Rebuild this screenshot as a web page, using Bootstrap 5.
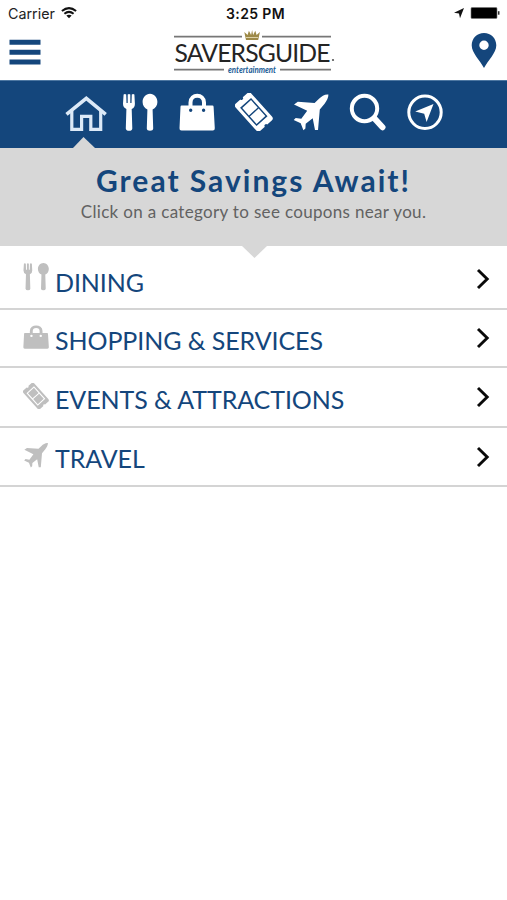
<!DOCTYPE html>
<html lang="en">
<head>
<meta charset="utf-8">
<meta name="viewport" content="width=device-width, initial-scale=1">
<title>SaversGuide</title>
<link href="https://cdn.jsdelivr.net/npm/bootstrap@5.3.0/dist/css/bootstrap.min.css" rel="stylesheet">
<style>
:root{--navy:#14467c;--pale:#d7d7d7}
body{font-family:Lato,sans-serif;background:#fff;min-height:900px;overflow-x:hidden}
svg{display:block;flex-shrink:0}
.status-bar{height:28px;padding-bottom:2px;font:14.3px Inter,sans-serif;color:#222}
.status-time{font-weight:600;font-size:14px;letter-spacing:.35px;color:#111;margin-left:2px}
.brand-bar{height:52px;color:var(--navy)}
.icon-bar{height:68px;background:var(--navy);border-top:1px solid #4d77a2;padding-top:12px;color:#fff}
.icon-cell{width:57px}
.caret-up{left:73px;bottom:0}
.hero{height:98px;background:var(--pale);padding-top:16px}
.hero h1{font-size:30px;font-weight:700;line-height:32px;color:var(--navy);letter-spacing:2px;margin:0}
.hero p{font-size:17px;line-height:20px;color:#626262;letter-spacing:.33px;margin:6px 0 0}
.caret-down{left:242px;top:98px;z-index:2}
.list-group-flush>.list-group-item.category{border:0;border-bottom:2px solid #d4d4d4;height:59px;padding:0 17px 0 23px;color:var(--navy)}
.list-group-flush>.list-group-item.category:first-child{height:64px;padding-top:7px}
.list-group-flush>.list-group-item.category:nth-child(2){height:58px}
.list-group-flush>.list-group-item.category:nth-child(3){height:60px}
.category span{font-size:25px;line-height:30px;letter-spacing:-.08px;white-space:nowrap;margin-left:6px;padding-top:3px}
.category .glyph{color:#bfbfbf;margin-bottom:3px}
.category:first-child .glyph{margin-bottom:8px}
.category:first-child .ms-auto{margin-bottom:4px}
</style>
</head>
<body>
<svg width="0" height="0" class="position-absolute" aria-hidden="true">
  <symbol id="utensils" viewBox="0 0 38 38">
    <path fill="currentColor" d="M1.800 1.600Q3.100.4 4.400 1.600L4.700 10h1.200V1.600q1.300-1.200 2.600 0V10h1.200l.3-8.400q1.300-1.200 2.600 0l.5 9.200q.1 3.900-3.200 5.200l.6 19.500q-.2 2.300-3.200 2.300T4 35.500L4.600 16Q1.200 14.500 1.200 10.800z" transform="translate(.8 0)"/>
    <path fill="currentColor" d="M29 .7c4.300 0 7.400 3.800 7.400 8.200 0 3.500-1.900 6.300-4.800 7.500l.6 19.200q-.2 2.200-3.200 2.200t-3.200-2.200l.6-19.200c-2.900-1.200-4.800-4-4.800-7.500C21.600 4.500 24.700.7 29 .7z"/>
  </symbol>
  <symbol id="bag" viewBox="0 0 38 38">
    <path fill="none" stroke="currentColor" stroke-width="4" d="M12.500 13V9.500C12.500 .5 26 .5 26 9.500V13"/>
    <path fill="currentColor" fill-rule="evenodd" d="M3.500 12.500h31q1 0 1.100 1.200l1.200 21.500q.1 2.300-2 2.300H3.500q-2.200 0-2-2.300l1-21.500q.1-1.200 1-1.200zM12.700 15.600a1.700 1.700 0 1 0 0 3.400 1.700 1.700 0 0 0 0-3.400zM25.600 15.600a1.700 1.700 0 1 0 0 3.400 1.700 1.700 0 0 0 0-3.400z"/>
  </symbol>
  <symbol id="ticket" viewBox="0 0 38 38">
    <g transform="translate(18.800 19) rotate(48)">
      <path fill="currentColor" fill-rule="evenodd" d="M-15.500-10.500h31q2.800 0 2.800 2.800V-1.600q-1.500 0-1.500 1.600t1.500 1.600v6.100q0 2.800-2.800 2.800h-31q-2.800 0-2.800-2.800V1.600q1.500 0 1.500-1.600t-1.500-1.600v-6.100q0-2.800 2.800-2.800zM-12.300-7.400V7.400h24.600V-7.400z"/>
      <path fill="currentColor" d="M-10.700-5.900H-.7V5.900H-10.700zM.7-5.900H10.700V5.900H.7z"/>
    </g>
  </symbol>
  <symbol id="plane" viewBox="0 0 38 38">
    <path fill="currentColor" d="M36.400 1.500C33 1 29.500 3.200 27 5.700L22.600 10 5.800 8.800 2 11.500l13.200 6.300-5.900 8-5.600-.9-2 2 7 3.300 2.700 7 2-1.800.3-4.700 7-5.500 2.300 11.800h3L27.800 16.500l4.800-5.800c2-2.700 4-6.100 3.800-9.200z"/>
  </symbol>
  <symbol id="chevron" viewBox="0 0 14 22">
    <path fill="none" stroke="#0a0a0a" stroke-width="2.900" d="M2 2 11.200 11 2 20"/>
  </symbol>
</svg>

<header>
  <div class="status-bar position-relative d-flex align-items-center justify-content-between ps-2 pe-1">
    <div class="d-flex align-items-center gap-1">
      <span>Carrier</span>
      <svg width="18" height="14" viewBox="-1 0 18 14" fill="none" stroke="#111" stroke-width="2"><path d="M1.900 5Q9-.8 16.100 5M4.400 7.700Q9 4 13.600 7.700"/><path fill="#111" stroke="none" d="M6.300 9.600Q9 7.700 11.700 9.600L9 12.300z"/></svg>
    </div>
    <span class="status-time position-absolute start-50 translate-middle-x">3:25 PM</span>
    <div class="d-flex align-items-center">
      <svg width="12" height="12" viewBox="0 0 12 12" class="me-1"><path fill="#111" d="M11 1 7 11.200 6 6.600 1 5.800z"/></svg>
      <svg width="34" height="14" viewBox="0 0 34 14"><rect x="2" y="1.500" width="26" height="11" rx="1" fill="#000" stroke="#777" stroke-width=".6"/><path stroke="#333" stroke-width="1.600" d="M29.700 5.200v3.500"/></svg>
    </div>
  </div>
  <div class="brand-bar d-flex justify-content-between">
    <svg width="50" height="52" viewBox="0 28 50 52" stroke="currentColor" stroke-width="5"><path d="M9.500 42.300h31M9.500 52.300h31M9.500 62h31"/></svg>
    <svg width="175" height="52" viewBox="165 28 175 52" role="img" aria-label="SaversGuide entertainment" style="margin-right:2px">
      <path stroke="#777" stroke-width="1.700" d="M174 36.700h68M262 36.700h69M174 69.700h50M280 69.700h51"/>
      <path fill="#9d8947" d="m244.300 32 3.300 3 1.300-4.300 2.200 4.300 1-5 1 5 2.200-4.300 1.300 4.300 3.300-3-1.700 8h-12.200z"/><path stroke="#eee3c0" stroke-width=".8" d="M246 37.500h12"/>
      <text x="174.500" y="61.500" font-family="Lato" font-size="24.700" fill="#242424" textLength="156" lengthAdjust="spacing">SAVERSGUIDE</text>
      <circle cx="333" cy="60" r="1.100" fill="#555"/>
      <text x="228" y="72.500" font-family="Lato" font-size="9.200" font-style="italic" font-weight="700" fill="#1a5c96" textLength="48" lengthAdjust="spacingAndGlyphs">entertainment</text>
    </svg>
    <svg width="50" height="52" viewBox="457 28 50 52"><path fill="currentColor" fill-rule="evenodd" d="M484 33c-7 0-12.300 5.300-12.300 12.300C471.700 53 480 60.500 484 68c4-7.500 12.300-15 12.300-22.700C496.300 38.300 491 33 484 33zm0 7.500a4.700 4.700 0 1 1 0 9.400 4.700 4.700 0 0 1 0-9.400z"/></svg>
  </div>
</header>

<nav class="icon-bar position-relative d-flex justify-content-center align-items-start">
  <a class="icon-cell d-flex justify-content-center text-reset" href="#" aria-label="Home">
    <svg width="50" height="38" viewBox="58 93 50 38" fill="none" stroke="#dce9f7" stroke-width="3.600"><path d="m66.500 114.300 19.800-16 19.400 16"/><path stroke-width="3.200" d="M71.800 111v18.300h9.800v-13h9.200v13h9.900V111"/></svg>
  </a>
  <a class="icon-cell d-flex justify-content-center text-reset" href="#" aria-label="Dining"><svg width="38" height="38"><use href="#utensils"/></svg></a>
  <a class="icon-cell d-flex justify-content-center text-reset" href="#" aria-label="Shopping"><svg width="38" height="38"><use href="#bag"/></svg></a>
  <a class="icon-cell d-flex justify-content-center text-reset" href="#" aria-label="Events"><svg width="38" height="38"><use href="#ticket"/></svg></a>
  <a class="icon-cell d-flex justify-content-center text-reset" href="#" aria-label="Travel"><svg width="38" height="38"><use href="#plane"/></svg></a>
  <a class="icon-cell d-flex justify-content-center text-reset" href="#" aria-label="Search"><svg width="38" height="38" fill="none" stroke="currentColor"><circle cx="15.500" cy="15.500" r="12.700" stroke-width="4"/><path stroke-width="6" stroke-linecap="round" d="m25.500 25.500 8 8.800"/></svg></a>
  <a class="icon-cell d-flex justify-content-center text-reset" href="#" aria-label="Nearby"><svg width="38" height="38"><circle cx="19" cy="19.300" r="16.200" fill="none" stroke="currentColor" stroke-width="3"/><path fill="currentColor" d="M27.500 11 20.600 29l-2.400-8.300-9-2.200z"/></svg></a>
  <svg class="caret-up position-absolute" width="22" height="11"><path fill="#d7d7d7" d="M0 11 10.500 0 22 11z"/></svg>
</nav>

<section class="hero position-relative text-center">
  <h1>Great Savings Await!</h1>
  <p>Click on a category to see coupons near you.</p>
  <svg class="caret-down position-absolute" width="25" height="12"><path fill="#d7d7d7" d="M0 0h25L12.500 12z"/></svg>
</section>

<main class="list-group list-group-flush">
  <a href="#" class="category list-group-item d-flex align-items-center"><svg class="glyph" width="26" height="29" viewBox="0 0 26 29"><use href="#utensils" x="-1" width="28" height="29"/></svg><span>DINING</span><svg class="ms-auto" width="14" height="22"><use href="#chevron"/></svg></a>
  <a href="#" class="category list-group-item d-flex align-items-center"><svg class="glyph" width="26" height="24" viewBox="1 0 36 38" preserveAspectRatio="none"><use href="#bag" width="38" height="38"/></svg><span>SHOPPING &amp; SERVICES</span><svg class="ms-auto" width="14" height="22"><use href="#chevron"/></svg></a>
  <a href="#" class="category list-group-item d-flex align-items-center"><svg class="glyph" width="26" height="26"><use href="#ticket"/></svg><span>EVENTS &amp; ATTRACTIONS</span><svg class="ms-auto" width="14" height="22"><use href="#chevron"/></svg></a>
  <a href="#" class="category list-group-item d-flex align-items-center"><svg class="glyph" width="26" height="26"><use href="#plane"/></svg><span>TRAVEL</span><svg class="ms-auto" width="14" height="22"><use href="#chevron"/></svg></a>
</main>
<script src="https://cdn.jsdelivr.net/npm/bootstrap@5.3.0/dist/js/bootstrap.bundle.min.js"></script>
</body>
</html>
